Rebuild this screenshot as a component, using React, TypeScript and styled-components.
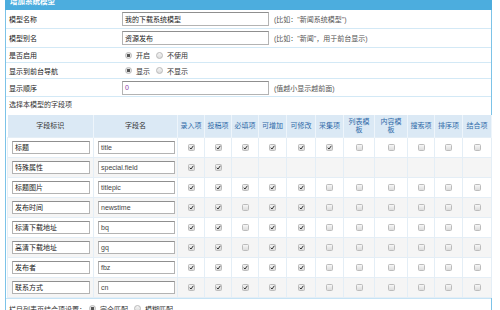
import React from 'react';
import styled, { createGlobalStyle } from 'styled-components';

const GlobalStyle = createGlobalStyle`
  body {
    margin: 0;
    background: #fff;
    font-family: "Liberation Sans", "Noto Sans CJK SC", sans-serif;
    font-size: 7px;
    color: #333;
  }
  * {
    box-sizing: border-box;
  }
`;

const Frame = styled.div`
  margin: -6px 0 0 5px;
  width: 487px;
  border-left: 1px solid #7cc3e8;
  border-right: 1px solid #7cc3e8;
`;

const TitleBar = styled.div`
  height: 16px;
  margin: 0 -1px;
  padding-left: 5px;
  background: #4cadde;
  color: #fff;
  font-weight: bold;
  font-size: 7.5px;
  line-height: 16px;
`;

const FormRow = styled.div<{ $h: number }>`
  display: grid;
  grid-template-columns: 116px 1fr;
  align-items: center;
  height: ${p => p.$h}px;
  border-bottom: 1px solid #d3e9f6;
`;

const Label = styled.div`
  padding-left: 3px;
  color: #222;
`;

const Value = styled.div`
  display: flex;
  align-items: center;
`;

const TextInput = styled.div<{ $w: number; $h: number; $color?: string }>`
  width: ${p => p.$w}px;
  height: ${p => p.$h}px;
  border: 1px solid #b3b3b3;
  border-top-color: #8f8f8f;
  background: #fff;
  padding-left: 2px;
  display: flex;
  align-items: center;
  color: ${p => p.$color || '#222'};
  white-space: nowrap;
  overflow: hidden;
`;

const Hint = styled.span`
  margin-left: 5px;
  color: #555;
`;

const Radio = styled.span<{ $on?: boolean }>`
  display: inline-block;
  width: 7px;
  height: 7px;
  border-radius: 50%;
  border: 1px solid #b9b9b9;
  background: ${p =>
    p.$on ? 'radial-gradient(circle, #555 0 1.4px, #e6e6e6 1.8px)' : 'linear-gradient(#f4f4f4, #dcdcdc)'};
  margin: 0 4px 0 3px;
`;

const Choice = styled.span`
  display: inline-flex;
  align-items: center;
  margin-right: 3px;
`;

const FieldSection = styled.div`
  padding: 0 0 0 1px;
  border-bottom: 1px solid #c6e3f5;
`;

const Caption = styled.div`
  height: 17px;
  line-height: 16px;
  padding-left: 2px;
`;

const Table = styled.table`
  border-collapse: collapse;
  table-layout: fixed;
  width: 484px;
  margin-top: 1px;
`;

const Th = styled.th<{ $blue?: boolean }>`
  height: 22px;
  padding: 0;
  background: #dbe9f5;
  font-weight: normal;
  line-height: 8px;
  color: ${p => (p.$blue ? '#2f6aa8' : '#333')};
  border-right: 1px solid #eef5fb;
`;

const Tr = styled.tr<{ $alt: boolean }>`
  height: 20px;
  background: ${p => (p.$alt ? '#f5f5f5' : '#fff')};
`;

const Td = styled.td`
  padding: 0;
  text-align: center;
  border: 1px solid #e4eef6;
`;

const InputCell = styled(Td)`
  padding-left: 4px;
  text-align: left;
`;

const Box = styled.span<{ $on?: boolean }>`
  display: inline-flex;
  align-items: center;
  justify-content: center;
  width: 7px;
  height: 7px;
  border: 1px solid #bcbcbc;
  border-radius: 1.5px;
  background: ${p => (p.$on ? 'linear-gradient(#f1f1f1, #d8d8d8)' : 'linear-gradient(#f6f6f6, #dddddd)')};
  vertical-align: middle;
`;

const Footer = styled.div`
  display: flex;
  align-items: center;
  height: 20px;
  padding-left: 3px;
`;

const Check = ({ on }: { on: boolean }) => (
  <Box $on={on}>
    {on && (
      <svg width="5" height="5" viewBox="0 0 10 10">
        <path d="M1.5 5.5 L4 8 L8.8 1.5" fill="none" stroke="#333" strokeWidth="2" />
      </svg>
    )}
  </Box>
);

const heads = ['录入项', '投稿项', '必填项', '可增加', '可修改', '采集项', '列表模|板', '内容模|板', '搜索项', '排序项', '结合项'];
const widths = [27, 27, 27, 28, 29, 28, 31, 33, 27, 28, 29];

const on5 = [1, 1, 1, 1, 1, 0, 0, 0, 0, 0, 0];
const off3 = [1, 1, 0, 1, 1, 0, 0, 0, 0, 0, 0];

const fields = [
  { label: '标题', name: 'title', checks: [1, 1, 1, 1, 1, 1, 0, 0, 0, 0, 0] },
  { label: '特殊属性', name: 'special.field', checks: [1, 1] },
  { label: '标题图片', name: 'titlepic', checks: on5 },
  { label: '发布时间', name: 'newstime', checks: off3 },
  { label: '标清下载地址', name: 'bq', checks: off3 },
  { label: '高清下载地址', name: 'gq', checks: off3 },
  { label: '发布者', name: 'fbz', checks: on5 },
  { label: '联系方式', name: 'cn', checks: on5 },
];

export default function App() {
  return (
    <>
      <GlobalStyle />
      <Frame>
        <TitleBar>增加系统模型</TitleBar>
        <FormRow $h={19}>
          <Label>模型名称</Label>
          <Value>
            <TextInput $w={147} $h={14}>我的下载系统模型</TextInput>
            <Hint>(比如："新闻系统模型")</Hint>
          </Value>
        </FormRow>
        <FormRow $h={19}>
          <Label>模型别名</Label>
          <Value>
            <TextInput $w={147} $h={14}>资源发布</TextInput>
            <Hint>(比如："新闻"，用于前台显示)</Hint>
          </Value>
        </FormRow>
        <FormRow $h={15}>
          <Label>是否启用</Label>
          <Value>
            <Choice><Radio $on />开启</Choice>
            <Choice><Radio />不使用</Choice>
          </Value>
        </FormRow>
        <FormRow $h={16}>
          <Label>显示到前台导航</Label>
          <Value>
            <Choice><Radio $on />显示</Choice>
            <Choice><Radio />不显示</Choice>
          </Value>
        </FormRow>
        <FormRow $h={18}>
          <Label>显示顺序</Label>
          <Value>
            <TextInput $w={147} $h={14} $color="#8a3aa8">0</TextInput>
            <Hint>(值越小显示越前面)</Hint>
          </Value>
        </FormRow>
        <FieldSection>
          <Caption>选择本模型的字段项</Caption>
          <Table>
            <colgroup>
              <col style={{ width: 86 }} />
              <col style={{ width: 84 }} />
              {widths.map((w, i) => (
                <col key={i} style={{ width: w }} />
              ))}
            </colgroup>
            <thead>
              <tr>
                <Th>字段标识</Th>
                <Th>字段名</Th>
                {heads.map(h => (
                  <Th key={h} $blue>
                    {h.split('|').map((part, i) => (
                      <React.Fragment key={i}>
                        {i > 0 && <br />}
                        {part}
                      </React.Fragment>
                    ))}
                  </Th>
                ))}
              </tr>
            </thead>
            <tbody>
              {fields.map((f, r) => (
                <Tr key={f.name} $alt={r % 2 === 1}>
                  <InputCell>
                    <TextInput $w={78} $h={13}>{f.label}</TextInput>
                  </InputCell>
                  <InputCell>
                    <TextInput $w={77} $h={13} $color="#444">{f.name}</TextInput>
                  </InputCell>
                  {widths.map((_, c) => (
                    <Td key={c}>{c < f.checks.length && <Check on={!!f.checks[c]} />}</Td>
                  ))}
                </Tr>
              ))}
            </tbody>
          </Table>
        </FieldSection>
        <Footer>
          栏目列表页结合项设置：
          <Choice><Radio $on />完全匹配</Choice>
          <Choice><Radio />模糊匹配</Choice>
        </Footer>
      </Frame>
    </>
  );
}
